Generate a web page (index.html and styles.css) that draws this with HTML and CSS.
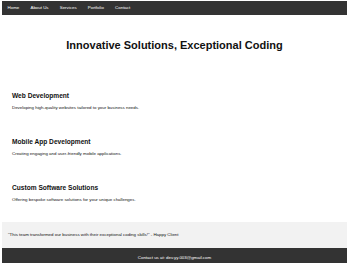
FILE: index.html
```html
<!DOCTYPE html>
<html lang="en">
    <head>
        <meta charset="UTF-8">
        <title>Innovative Solutions</title>
        <link rel="stylesheet" href="styles.css">
    </head>
    <body>
        <nav class="nav">
            <a class="nav__link" href="#">Home</a>
            <a class="nav__link" href="#">About Us</a>
            <a class="nav__link" href="#">Services</a>
            <a class="nav__link" href="#">Portfolio</a>
            <a class="nav__link" href="#">Contact</a>
        </nav>
        <h1 class="title">Innovative Solutions, Exceptional Coding</h1>
        <div class="services">
            <section class="service">
                <h2 class="service__title">Web Development</h2>
                <p class="service__text">Developing high-quality websites tailored to your business needs.</p>
            </section>
            <section class="service">
                <h2 class="service__title">Mobile App Development</h2>
                <p class="service__text">Creating engaging and user-friendly mobile applications.</p>
            </section>
            <section class="service">
                <h2 class="service__title">Custom Software Solutions</h2>
                <p class="service__text">Offering bespoke software solutions for your unique challenges.</p>
            </section>
        </div>
        <div class="testimonial">
            <p class="testimonial__text">"This team transformed our business with their exceptional coding skills!" - Happy Client</p>
        </div>
        <footer class="footer">
            <p class="footer__text">Contact us at: dev.yy.003@gmail.com</p>
        </footer>
    </body>
</html>
```
FILE: styles.css
```css
html, body{
    margin: 0;
}

body{
    padding: 1px 3px 0 2px;
    font-family: "Liberation Sans", Arial, sans-serif;
    color: #111;
    background: #fff;
}

.nav{
    display: flex;
    background-color: #333;
    height: 14px;
    align-items: center;
}

.nav__link{
    color: #fff;
    text-decoration: none;
    font-size: 4.4px;
    line-height: 14px;
    padding: 0 5.6px;
}

.title{
    margin: 24px 0 0;
    font-size: 11px;
    line-height: 13px;
    text-align: center;
}

.services{
    display: flex;
    flex-direction: column;
    gap: 27px;
    margin-top: 40px;
    padding: 0 10px;
}

.service__title{
    margin: 0 0 5px;
    font-size: 6.6px;
    line-height: 8px;
}

.service__text{
    margin: 0;
    font-size: 4.4px;
    line-height: 6px;
}

.testimonial{
    margin-top: 19px;
    background-color: #f2f2f2;
    padding: 10px 6px;
}

.testimonial__text{
    margin: 0;
    font-size: 4.4px;
    line-height: 6px;
}

.footer{
    background-color: #333;
    color: #fff;
    text-align: center;
    padding: 7px 0;
}

.footer__text{
    margin: 0;
    font-size: 4.4px;
    line-height: 6px;
}
```
